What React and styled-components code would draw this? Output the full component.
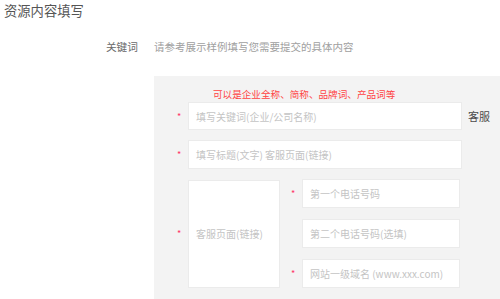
import React from "react"
import styled, { createGlobalStyle } from "styled-components"

const GlobalStyle = createGlobalStyle`
  body {
    margin: 0;
    background: #fff;
    font-family: "Noto Sans CJK SC", "Noto Sans", sans-serif;
  }
`;

const Page = styled.div`
  width: 500px;
  height: 299px;
  overflow: hidden;
`;

const Title = styled.h2`
  margin: 0;
  padding: 2px 0 0 4px;
  font-size: 13.3px;
  line-height: 18px;
  font-weight: normal;
  color: #555;
`;

const KeywordRow = styled.div`
  display: flex;
  align-items: center;
  margin-top: 17px;
  height: 18px;
`;

const Label = styled.div`
  width: 138px;
  text-align: right;
  font-size: 10.7px;
  color: #6a6a6a;
`;

const Tip = styled.div`
  margin-left: 16px;
  font-size: 10.5px;
  color: #a0a0a0;
`;

const Panel = styled.div`
  margin: 21px 0 0 154px;
  padding: 12px 0 12px 23px;
  background: #f3f3f3;
`;

const Hint = styled.div`
  margin-left: 36px;
  margin-bottom: 1px;
  font-size: 9.6px;
  line-height: 13px;
  color: #f44;
`;

const Row = styled.div`
  display: flex;
  align-items: center;
  margin-top: ${p => p.$gap || 0}px;
`;

const Star = styled.span`
  width: 11px;
  font-size: 9px;
  color: #f36;
  line-height: 1;
`;

const Field = styled.div`
  box-sizing: border-box;
  width: ${p => p.$w}px;
  height: ${p => p.$h}px;
  display: flex;
  align-items: center;
  padding-left: 7px;
  background: #fff;
  border: 1px solid #ebebeb;
  font-size: 10px;
  color: #c4c4c4;
`;

const Side = styled.span`
  margin-left: 6px;
  font-size: 11px;
  color: #4a4a4a;
`;

const Column = styled.div`
  display: flex;
  flex-direction: column;
  gap: 11px;
  margin-left: 11px;
`;

const Blank = styled.span`
  width: 11px;
`;

export default function App() {
  return (
    <Page>
      <GlobalStyle />
      <Title>资源内容填写</Title>
      <KeywordRow>
        <Label>关键词</Label>
        <Tip>请参考展示样例填写您需要提交的具体内容</Tip>
      </KeywordRow>
      <Panel>
        <Hint>可以是企业全称、简称、品牌词、产品词等</Hint>
        <Row>
          <Star>*</Star>
          <Field $w={274} $h={28}>填写关键词(企业/公司名称)</Field>
          <Side>客服</Side>
        </Row>
        <Row $gap={10}>
          <Star>*</Star>
          <Field $w={274} $h={29}>填写标题(文字) 客服页面(链接)</Field>
        </Row>
        <Row $gap={10}>
          <Star>*</Star>
          <Field $w={92} $h={108}>客服页面(链接)</Field>
          <Column>
            <Row>
              <Star>*</Star>
              <Field $w={158} $h={29}>第一个电话号码</Field>
            </Row>
            <Row>
              <Blank />
              <Field $w={158} $h={29}>第二个电话号码(选填)</Field>
            </Row>
            <Row>
              <Star>*</Star>
              <Field $w={158} $h={29}>网站一级域名 (www.xxx.com)</Field>
            </Row>
          </Column>
        </Row>
      </Panel>
    </Page>
  )
}
